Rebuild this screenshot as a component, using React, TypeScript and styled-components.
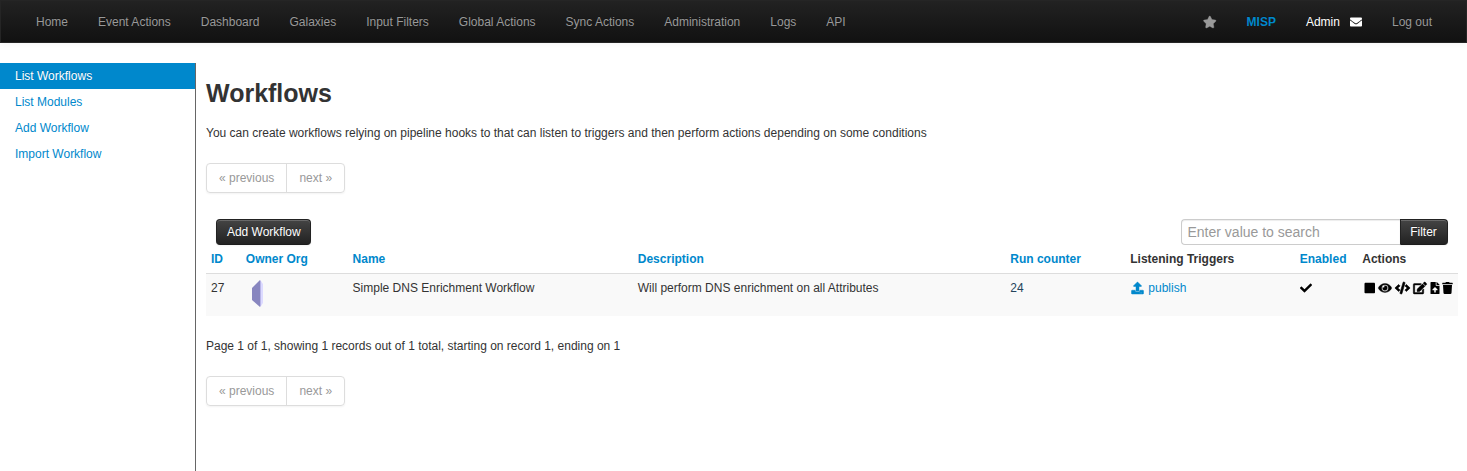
import React from "react";
import styled, { createGlobalStyle } from "styled-components";
import {
  FaStar, FaEnvelope, FaUpload, FaCheck, FaStop, FaEye, FaCode, FaEdit, FaFileUpload, FaTrash,
} from "react-icons/fa";

const GlobalStyle = createGlobalStyle`
  *, *::before, *::after { box-sizing: border-box; }
  body {
    margin: 0;
    background: #fff;
    color: #333;
    font: 12px/20px "Liberation Sans", Arial, sans-serif;
    overflow: hidden;
  }
  a { color: #0088cc; text-decoration: none; }
`;

const Page = styled.div`
  height: 471px;
  display: flex;
  flex-direction: column;
`;

const Navbar = styled.nav`
  flex: none;
  height: 43px;
  display: flex;
  justify-content: space-between;
  padding: 0 19px 0 20px;
  background: linear-gradient(to bottom, #222, #111);
  border: 1px solid #252525;
  box-shadow: 0 1px 8px rgba(0, 0, 0, 0.05);
`;

const NavGroup = styled.div`
  display: flex;
`;

const NavItem = styled.a<{ $tone?: string; $bold?: boolean }>`
  display: flex;
  align-items: center;
  padding: 0 15px;
  white-space: nowrap;
  color: ${(p) => p.$tone ?? "#999"};
  font-weight: ${(p) => (p.$bold ? 700 : 400)};
  text-shadow: 0 -1px 0 rgba(0, 0, 0, 0.25);
`;

const Glyph = styled.span<{ $w: number; $ml?: number; $weight?: number }>`
  display: inline-flex;
  margin-left: ${(p) => p.$ml ?? 0}px;
  svg {
    width: ${(p) => p.$w}px;
    height: 12px;
    overflow: visible;
    stroke-width: ${(p) => p.$weight ?? 0};
  }
`;

const Body = styled.div`
  flex: 1;
  display: flex;
  padding-top: 20px;
`;

const Sidebar = styled.aside`
  flex: none;
  width: 196px;
  border-right: 1px solid #666;
`;

const SideLink = styled.a<{ $active?: boolean }>`
  display: block;
  height: 26px;
  padding: 3px 15px;
  color: ${(p) => (p.$active ? "#fff" : "#0088cc")};
  background: ${(p) => (p.$active ? "#0088cc" : "transparent")};
  text-shadow: ${(p) => (p.$active ? "0 -1px 0 rgba(0,0,0,0.2)" : "none")};
`;

const Main = styled.main`
  flex: 1;
  padding: 10px 9px 0 10px;
`;

const Title = styled.h2`
  margin: 0 0 10px;
  font-size: 25px;
  line-height: 40px;
`;

const Text = styled.p`
  margin: 0;
`;

const Pager = styled.div`
  width: max-content;
  display: flex;
  margin: 20px 0 26px;
  border: 1px solid #ddd;
  border-radius: 4px;
  box-shadow: 0 1px 2px rgba(0, 0, 0, 0.05);
`;

const PagerItem = styled.span`
  height: 28px;
  padding: 4px 12px;
  color: #999;
  & + & { border-left: 1px solid #ddd; }
`;

const Toolbar = styled.div`
  display: flex;
  justify-content: space-between;
  height: 26px;
  padding: 0 10px;
`;

const DarkButton = styled.button<{ $attached?: boolean }>`
  width: ${(p) => (p.$attached ? 48 : 95)}px;
  height: 26px;
  padding: ${(p) => (p.$attached ? "0 1px 1px 0" : "0 0 1px 0.6px")};
  white-space: nowrap;
  text-align: center;
  color: #fff;
  font: inherit;
  text-shadow: 0 -1px 0 rgba(0, 0, 0, 0.25);
  background: linear-gradient(to bottom, #444, #222);
  border: 1px solid;
  border-color: #222 #222 #1c1c1c;
  border-radius: ${(p) => (p.$attached ? "0 4px 4px 0" : "4px")};
  box-shadow: inset 0 1px 0 rgba(255, 255, 255, 0.2), 0 1px 2px rgba(0, 0, 0, 0.05);
`;

const SearchGroup = styled.div`
  display: flex;
`;

const SearchInput = styled.input`
  width: 219px;
  height: 26px;
  padding: 0 5.5px;
  border: 1px solid #ccc;
  border-right: 0;
  border-radius: 4px 0 0 4px;
  font: 14px/20px "Liberation Sans", Arial, sans-serif;
  box-shadow: inset 0 1px 1px rgba(0, 0, 0, 0.075);
  outline: none;
  &::placeholder { color: #999; opacity: 1; }
`;

const Table = styled.table`
  width: 1252px;
  table-layout: fixed;
  border-collapse: separate;
  border-spacing: 0;
  margin-bottom: 20px;
`;

const Th = styled.th<{ $w: number; $link?: boolean }>`
  width: ${(p) => p.$w}px;
  height: 28px;
  padding: 4px 5px;
  text-align: left;
  white-space: nowrap;
  color: ${(p) => (p.$link ? "#0088cc" : "#333")};
`;

const Td = styled.td<{ $tone?: string }>`
  height: 43px;
  padding: 4px 5px;
  vertical-align: top;
  white-space: nowrap;
  background: #f9f9f9;
  border-top: 1px solid #ddd;
  color: ${(p) => p.$tone ?? "#333"};
`;

const OrgLogo = styled.svg`
  display: block;
  margin: 2px 0 0 6px;
`;

const IconLine = styled.div`
  display: flex;
  align-items: center;
  height: 20px;
  color: #000;
`;

const TriggerLink = styled.a`
  display: flex;
  align-items: center;
  height: 20px;
  gap: 4px;
  padding-left: 1px;
`;

const navItems = ["Home", "Event Actions", "Dashboard", "Galaxies", "Input Filters", "Global Actions", "Sync Actions", "Administration", "Logs", "API"];
const sideItems = ["List Workflows", "List Modules", "Add Workflow", "Import Workflow"];
const columns = [
  { label: "ID", w: 34.8, link: true },
  { label: "Owner Org", w: 106.8, link: true },
  { label: "Name", w: 285.2, link: true },
  { label: "Description", w: 372.5, link: true },
  { label: "Run counter", w: 120, link: true },
  { label: "Listening Triggers", w: 169.5 },
  { label: "Enabled", w: 62.5, link: true },
  { label: "Actions", w: 100.7 },
];

const Pagination = () => (
  <Pager>
    <PagerItem>« previous</PagerItem>
    <PagerItem>next »</PagerItem>
  </Pager>
);

export default function App() {
  return (
    <Page>
      <GlobalStyle />
      <Navbar>
        <NavGroup>
          {navItems.map((label) => <NavItem key={label}>{label}</NavItem>)}
        </NavGroup>
        <NavGroup>
          <NavItem><Glyph $w={13.5} $weight={15}><FaStar /></Glyph></NavItem>
          <NavItem $tone="#0088cc" $bold>MISP</NavItem>
          <NavItem $tone="#fff">Admin<Glyph $w={12} $ml={10}><FaEnvelope /></Glyph></NavItem>
          <NavItem>Log out</NavItem>
        </NavGroup>
      </Navbar>
      <Body>
        <Sidebar>
          {sideItems.map((label, i) => <SideLink key={label} $active={i === 0}>{label}</SideLink>)}
        </Sidebar>
        <Main>
          <Title>Workflows</Title>
          <Text>You can create workflows relying on pipeline hooks to that can listen to triggers and then perform actions depending on some conditions</Text>
          <Pagination />
          <Toolbar>
            <DarkButton>Add Workflow</DarkButton>
            <SearchGroup>
              <SearchInput placeholder="Enter value to search" />
              <DarkButton $attached>Filter</DarkButton>
            </SearchGroup>
          </Toolbar>
          <Table>
            <thead>
              <tr>
                {columns.map((c) => <Th key={c.label} $w={c.w} $link={c.link}>{c.label}</Th>)}
              </tr>
            </thead>
            <tbody>
              <tr>
                <Td>27</Td>
                <Td>
                  <OrgLogo width="12" height="28" viewBox="0 0 12 28">
                    <path d="M0 8 8 0V27L0 20Z" fill="#8886bf" />
                    <path d="M8 0 9 1V26L8 27Z" fill="#b9b6e8" />
                    <path d="M9 1 11 4V23L9 26Z" fill="#dcdaff" />
                  </OrgLogo>
                </Td>
                <Td>Simple DNS Enrichment Workflow</Td>
                <Td>Will perform DNS enrichment on all Attributes</Td>
                <Td $tone="#24445c">24</Td>
                <Td><TriggerLink><Glyph $w={13} $weight={20}><FaUpload /></Glyph>publish</TriggerLink></Td>
                <Td><IconLine><Glyph $w={12}><FaCheck /></Glyph></IconLine></Td>
                <Td>
                  <IconLine>
                    <Glyph $w={11.5} $ml={1.5}><FaStop /></Glyph>
                    <Glyph $w={14} $ml={2.5} $weight={16}><FaEye /></Glyph>
                    <Glyph $w={15} $ml={3} $weight={26}><FaCode /></Glyph>
                    <Glyph $w={14} $ml={3} $weight={16}><FaEdit /></Glyph>
                    <Glyph $w={10} $ml={3}><FaFileUpload /></Glyph>
                    <Glyph $w={11} $ml={2.5}><FaTrash /></Glyph>
                  </IconLine>
                </Td>
              </tr>
            </tbody>
          </Table>
          <Text>Page 1 of 1, showing 1 records out of 1 total, starting on record 1, ending on 1</Text>
          <Pagination />
        </Main>
      </Body>
    </Page>
  );
}
